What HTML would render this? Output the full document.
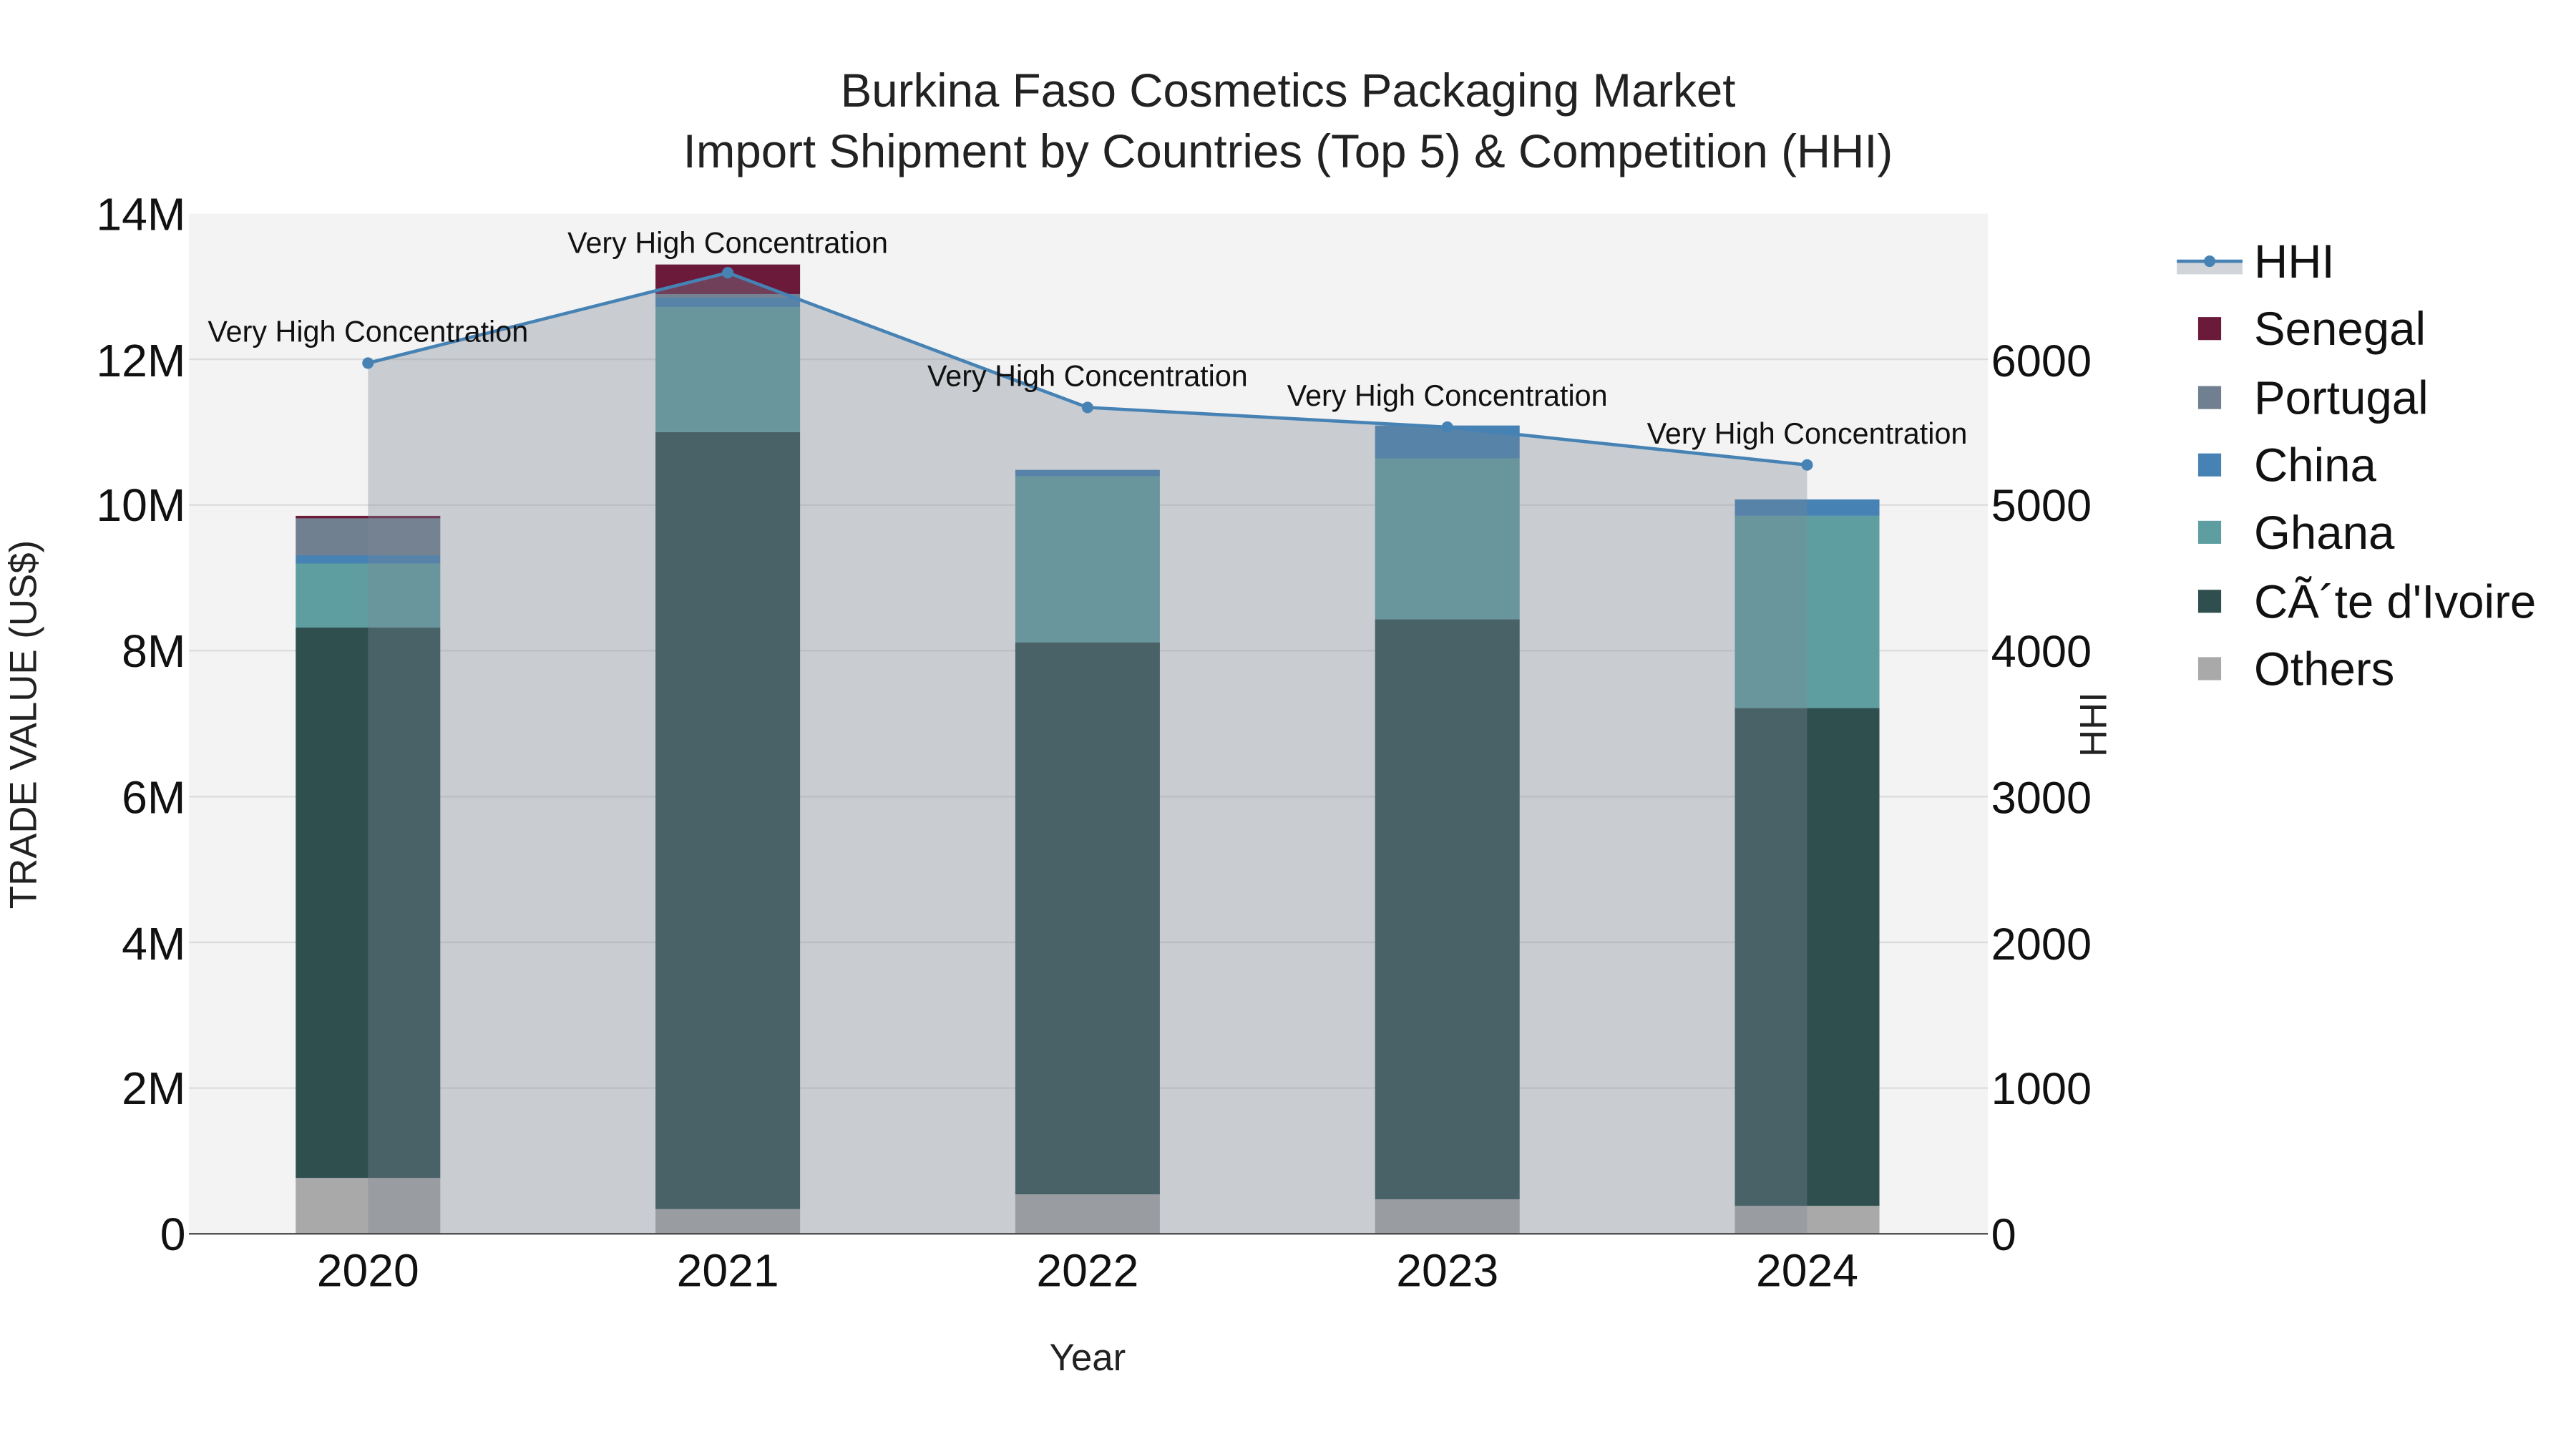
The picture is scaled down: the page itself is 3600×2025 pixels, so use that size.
<!DOCTYPE html>
<html><head><meta charset="utf-8"><style>html,body{margin:0;padding:0;background:#fff}svg{display:block}</style></head><body>
<svg width="3600" height="2025" viewBox="0 0 1568 882" xmlns="http://www.w3.org/2000/svg" font-family="Liberation Sans, sans-serif">
<rect width="1568" height="882" fill="#fff"/>
<rect x="115" y="130" width="1095" height="621" fill="#f3f3f3"/>
<g stroke="#dcdcdc" stroke-width="1">
<line x1="115" x2="1210" y1="662.3" y2="662.3"/><line x1="115" x2="1210" y1="573.6" y2="573.6"/><line x1="115" x2="1210" y1="484.9" y2="484.9"/><line x1="115" x2="1210" y1="396.1" y2="396.1"/><line x1="115" x2="1210" y1="307.4" y2="307.4"/><line x1="115" x2="1210" y1="218.7" y2="218.7"/>
</g>
<g>
<rect x="180" y="717" width="88" height="34" fill="#a9a9a9"/><rect x="180" y="382" width="88" height="335" fill="#2f4f4f"/><rect x="180" y="343" width="88" height="39" fill="#5f9ea0"/><rect x="180" y="338" width="88" height="5" fill="#4682b4"/><rect x="180" y="315" width="88" height="23" fill="#708090"/><rect x="180" y="314" width="88" height="1.5" fill="#6b1a3a"/>
<rect x="399" y="736" width="88" height="15" fill="#a9a9a9"/><rect x="399" y="263" width="88" height="473" fill="#2f4f4f"/><rect x="399" y="187" width="88" height="76" fill="#5f9ea0"/><rect x="399" y="181" width="88" height="6" fill="#4682b4"/><rect x="399" y="179" width="88" height="2" fill="#708090"/><rect x="399" y="161" width="88" height="18" fill="#6b1a3a"/>
<rect x="618" y="727" width="88" height="24" fill="#a9a9a9"/><rect x="618" y="391" width="88" height="336" fill="#2f4f4f"/><rect x="618" y="290" width="88" height="101" fill="#5f9ea0"/><rect x="618" y="286" width="88" height="4" fill="#4682b4"/>
<rect x="837" y="730" width="88" height="21" fill="#a9a9a9"/><rect x="837" y="377" width="88" height="353" fill="#2f4f4f"/><rect x="837" y="279" width="88" height="98" fill="#5f9ea0"/><rect x="837" y="259" width="88" height="20" fill="#4682b4"/>
<rect x="1056" y="734" width="88" height="17" fill="#a9a9a9"/><rect x="1056" y="431" width="88" height="303" fill="#2f4f4f"/><rect x="1056" y="314" width="88" height="117" fill="#5f9ea0"/><rect x="1056" y="304" width="88" height="10" fill="#4682b4"/>
</g>
<polygon points="224,751 224,221 443,166 662,248 881,260 1100,283 1100,751" fill="rgba(124,136,150,0.35)"/>
<polyline points="224,221 443,166 662,248 881,260 1100,283" fill="none" stroke="#4682b4" stroke-width="2"/>
<g fill="#4682b4"><circle cx="224" cy="221" r="3.5"/><circle cx="443" cy="166" r="3.5"/><circle cx="662" cy="248" r="3.5"/><circle cx="881" cy="260" r="3.5"/><circle cx="1100" cy="283" r="3.5"/></g>
<g font-size="18" text-anchor="middle" fill="#111">
<text x="224" y="208">Very High Concentration</text><text x="443" y="154">Very High Concentration</text><text x="662" y="235">Very High Concentration</text><text x="881" y="247">Very High Concentration</text><text x="1100" y="270">Very High Concentration</text>
</g>
<line x1="115" x2="1210" y1="751" y2="751" stroke="#444" stroke-width="1"/>
<g text-anchor="middle" fill="#222" font-size="28.5">
<text x="784" y="65">Burkina Faso Cosmetics Packaging Market</text>
<text x="784" y="102">Import Shipment by Countries (Top 5) &amp; Competition (HHI)</text>
</g>
<g font-size="28" fill="#111" text-anchor="end">
<text x="113" y="761">0</text><text x="113" y="672">2M</text><text x="113" y="584">4M</text><text x="113" y="495">6M</text><text x="113" y="406">8M</text><text x="113" y="317">10M</text><text x="113" y="229">12M</text><text x="113" y="140">14M</text>
</g>
<g font-size="27.5" fill="#111">
<text x="1212" y="761">0</text><text x="1212" y="672">1000</text><text x="1212" y="584">2000</text><text x="1212" y="495">3000</text><text x="1212" y="406">4000</text><text x="1212" y="317">5000</text><text x="1212" y="229">6000</text>
</g>
<g font-size="28" fill="#111" text-anchor="middle">
<text x="224" y="783">2020</text><text x="443" y="783">2021</text><text x="662" y="783">2022</text><text x="881" y="783">2023</text><text x="1100" y="783">2024</text>
</g>
<text x="662" y="834" font-size="23" text-anchor="middle" fill="#222">Year</text>
<text transform="translate(22,441) rotate(-90)" font-size="23" text-anchor="middle" fill="#222">TRADE VALUE (US$)</text>
<text transform="translate(1282,441) rotate(-90)" font-size="23" text-anchor="middle" fill="#222">HHI</text>
<rect x="1325" y="159" width="40" height="8" fill="rgba(124,136,150,0.35)"/>
<line x1="1325" x2="1365" y1="159" y2="159" stroke="#4682b4" stroke-width="2"/><circle cx="1345" cy="159" r="3.5" fill="#4682b4"/>
<rect x="1338" y="193" width="14" height="14" fill="#6b1a3a"/>
<rect x="1338" y="235" width="14" height="14" fill="#708090"/>
<rect x="1338" y="276" width="14" height="14" fill="#4682b4"/>
<rect x="1338" y="317" width="14" height="14" fill="#5f9ea0"/>
<rect x="1338" y="359" width="14" height="14" fill="#2f4f4f"/>
<rect x="1338" y="400" width="14" height="14" fill="#a9a9a9"/>
<g font-size="28.5" fill="#111">
<text x="1372" y="169">HHI</text><text x="1372" y="210">Senegal</text><text x="1372" y="252">Portugal</text><text x="1372" y="293">China</text><text x="1372" y="334">Ghana</text><text x="1372" y="376">CÃ´te d'Ivoire</text><text x="1372" y="417">Others</text>
</g>
</svg>
</body></html>
